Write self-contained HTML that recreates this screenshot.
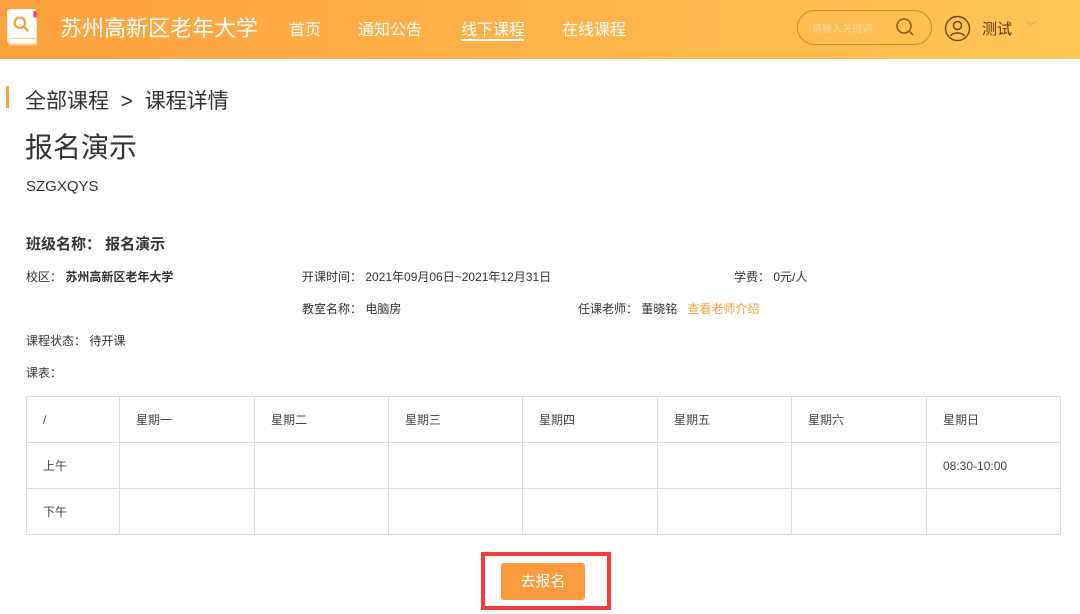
<!DOCTYPE html>
<html><head><meta charset="utf-8"><style>
*{margin:0;padding:0;box-sizing:border-box}
body{width:1080px;height:614px;overflow:hidden;background:#fff;font-family:"Liberation Sans","Noto Sans CJK SC",sans-serif;color:#333;position:relative}
.hd{position:absolute;left:0;top:0;width:1080px;height:59px;background:linear-gradient(90deg,#fba23e,#feb24a 50%,#ffc658)}
.a{position:absolute;white-space:nowrap}
table{position:absolute;left:26px;top:396px;border-collapse:collapse;font-size:12px;color:#444}
td{border:1px solid #ddd;height:46px;padding-left:16px;vertical-align:middle}
</style></head><body>
<div class="hd">
<svg class="a" style="left:6px;top:8px" width="34" height="40" viewBox="0 0 32 38"><rect x="1" y="1" width="28" height="33" rx="3" fill="#fff"/><rect x="3" y="29" width="26" height="6" rx="1" fill="none" stroke="#fcd3a0" stroke-width="1.2"/><rect x="26" y="3" width="3" height="6" fill="#f35"/><circle cx="13" cy="14" r="5" fill="none" stroke="#f9a040" stroke-width="2.2"/><line x1="16.5" y1="17.5" x2="21" y2="22" stroke="#f9a040" stroke-width="2.5"/></svg>
<div class="a" style="left:60px;top:11px;font-size:22px;color:#fff">苏州高新区老年大学</div>
<div class="a" style="left:289px;top:16px;font-size:16px;color:#fff">首页</div>
<div class="a" style="left:358px;top:16px;font-size:16px;color:#fff">通知公告</div>
<div class="a" style="left:461px;top:16px;font-size:16px;color:#fff">线下课程</div>
<div class="a" style="left:461px;top:39px;width:63px;height:2px;background:#fff"></div>
<div class="a" style="left:562px;top:16px;font-size:16px;color:#fff">在线课程</div>
<div class="a" style="left:797px;top:10px;width:135px;height:35px;border:1px solid #c88a2c;border-radius:18px"></div>
<div class="a" style="left:812px;top:20px;font-size:10px;color:#fbd9a5">请输入关键词</div>
<svg class="a" style="left:895px;top:17px" width="20" height="20"><circle cx="9" cy="9" r="7" fill="none" stroke="#8a5a10" stroke-width="1.5"/><line x1="14" y1="14" x2="18" y2="18" stroke="#8a5a10" stroke-width="1.5"/></svg>
<svg class="a" style="left:944px;top:15px" width="27" height="27"><circle cx="13.5" cy="13.5" r="12" fill="none" stroke="#6a4a15" stroke-width="1.4"/><circle cx="13.5" cy="10.5" r="4" fill="none" stroke="#6a4a15" stroke-width="1.4"/><path d="M6.5 21c2-4 12-4 14 0" fill="none" stroke="#6a4a15" stroke-width="1.4"/></svg>
<div class="a" style="left:982px;top:18px;font-size:15px;color:#5a3e10">测试</div>
<div class="a" style="left:1026px;top:18px;font-size:11px;color:#d9a055">﹀</div>
</div>
<div class="a" style="left:6px;top:86px;width:3px;height:22px;background:#f9a040"></div>
<div class="a" style="left:25px;top:85px;font-size:21px;color:#333">全部课程 &nbsp;&gt;&nbsp; 课程详情</div>
<div class="a" style="left:25px;top:126px;font-size:28px;color:#333">报名演示</div>
<div class="a" style="left:26px;top:178px;font-size:15px;color:#333">SZGXQYS</div>
<div class="a" style="left:26px;top:233px;font-size:15px;font-weight:bold;color:#333">班级名称：&nbsp;报名演示</div>
<div class="a" style="left:26px;top:268px;font-size:12px">校区：&nbsp;<b>苏州高新区老年大学</b></div>
<div class="a" style="left:302px;top:268px;font-size:12px">开课时间：&nbsp;2021年09月06日~2021年12月31日</div>
<div class="a" style="left:734px;top:268px;font-size:12px">学费：&nbsp;0元/人</div>
<div class="a" style="left:302px;top:300px;font-size:12px">教室名称：&nbsp;电脑房</div>
<div class="a" style="left:578px;top:300px;font-size:12px">任课老师：&nbsp;董晓铭 &nbsp;&nbsp;<span style="color:#f9a040">查看老师介绍</span></div>
<div class="a" style="left:26px;top:332px;font-size:12px">课程状态：&nbsp;待开课</div>
<div class="a" style="left:26px;top:364px;font-size:12px">课表：</div>
<table>
<tr><td style="width:93px">/</td><td style="width:135px">星期一</td><td style="width:134px">星期二</td><td style="width:134px">星期三</td><td style="width:135px">星期四</td><td style="width:134px">星期五</td><td style="width:135px">星期六</td><td style="width:134px">星期日</td></tr>
<tr><td>上午</td><td></td><td></td><td></td><td></td><td></td><td></td><td>08:30-10:00</td></tr>
<tr><td>下午</td><td></td><td></td><td></td><td></td><td></td><td></td><td></td></tr>
</table>
<div class="a" style="left:481px;top:552px;width:130px;height:58px;border:4px solid #f23c3c"></div>
<div class="a" style="left:501px;top:563px;width:84px;height:37px;background:#fb9a3c;border-radius:3px;color:#fff;font-size:15px;text-align:center;line-height:37px">去报名</div>
</body></html>
